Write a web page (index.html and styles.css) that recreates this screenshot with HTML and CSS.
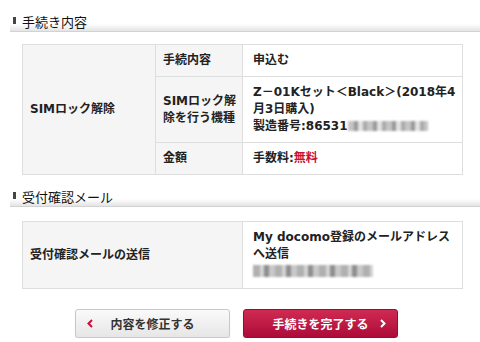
FILE: index.html
```html
<!DOCTYPE html>
<html lang="ja">
<head>
    <meta charset="UTF-8">
    <meta name="viewport" content="width=device-width, initial-scale=1.0">
    <title>手続き内容</title>
    <link rel="stylesheet" href="styles.css">
</head>
<body>
    <h2 class="heading">手続き内容</h2>
    <table class="info">
        <colgroup>
            <col class="c-item">
            <col class="c-sub">
            <col>
        </colgroup>
        <tr>
            <th rowspan="3">SIMロック解除</th>
            <th class="sub">手続内容</th>
            <td>申込む</td>
        </tr>
        <tr>
            <th class="sub">SIMロック解除を行う機種</th>
            <td>Z－01Kセット＜Black＞(2018年4月3日購入)<br>製造番号:86531<span class="mask mask-num"></span></td>
        </tr>
        <tr>
            <th class="sub">金額</th>
            <td>手数料:<span class="free">無料</span></td>
        </tr>
    </table>

    <h2 class="heading">受付確認メール</h2>
    <table class="info">
        <colgroup>
            <col class="c-wide">
            <col>
        </colgroup>
        <tr>
            <th>受付確認メールの送信</th>
            <td>My docomo登録のメールアドレスへ送信<br><span class="mask mask-mail"></span></td>
        </tr>
    </table>

    <div class="actions">
        <button class="btn btn-back">
            <svg width="6" height="9" viewBox="0 0 6 9"><polyline points="5,1 1.5,4.5 5,8" fill="none" stroke="#c8103c" stroke-width="2"/></svg>
            <span>内容を修正する</span>
            <span></span>
        </button>
        <button class="btn btn-done">
            <span></span>
            <span>手続きを完了する</span>
            <svg width="6" height="9" viewBox="0 0 6 9"><polyline points="1,1 4.5,4.5 1,8" fill="none" stroke="#fff" stroke-width="2"/></svg>
        </button>
    </div>
</body>
</html>
```

FILE: styles.css
```css
body {
    margin: 0;
    background: #fff;
    color: #222;
    font-family: "DejaVu Sans", "Noto Sans CJK JP", sans-serif;
    font-size: 12px;
}
.heading {
    margin: 13px 0 0 10px;
    padding-left: 3px;
    height: 18px;
    line-height: 18px;
    font-family: "Noto Sans CJK JP", sans-serif;
    font-size: 13px;
    font-weight: normal;
    color: #111;
    background: linear-gradient(#fff 60%, #e4e4e4);
    border-bottom: 1px solid #d2d2d2;
}
.heading::before {
    content: "";
    display: inline-block;
    width: 3px;
    height: 7px;
    margin-right: 6px;
    vertical-align: 3px;
    background: #444;
}
.info {
    margin: 12px 0 0 22px;
    width: 441px;
    border-collapse: collapse;
    table-layout: fixed;
    border: 1px solid #dedede;
    line-height: 17px;
}
.info + .heading {
    margin-top: 13px;
}
.info + .heading + .info {
    margin-top: 14px;
}
.c-item { width: 133px; }
.c-sub { width: 87px; }
.c-wide { width: 220px; }
.info th,
.info td {
    border: 1px solid #dedede;
    padding: 7px 7px;
    text-align: left;
    font-weight: bold;
    vertical-align: middle;
}
.info th {
    background: #f5f5f5;
}
.info th.sub {
    padding-right: 4px;
}
.info td {
    background: #fff;
    padding-left: 10px;
    padding-right: 3px;
}
.free {
    color: #c8103c;
}
.mask {
    display: inline-block;
    vertical-align: -1px;
    filter: blur(0.8px);
}
.mask-num {
    width: 80px;
    height: 10px;
    background: repeating-linear-gradient(90deg, #c4c4c4 0 6px, #999 6px 10px, #e2e2e2 10px 15px, #aaa 15px 19px);
}
.mask-mail {
    width: 120px;
    height: 12px;
    margin-top: 2px;
    background: repeating-linear-gradient(90deg, #b0b0b0 0 7px, #d4d4d4 7px 11px, #8e8e8e 11px 16px, #c8c8c8 16px 22px);
}
.actions {
    display: flex;
    gap: 13px;
    margin: 20px 0 0 75px;
}
.btn {
    display: grid;
    grid-template-columns: 14px 1fr 14px;
    align-items: center;
    width: 155px;
    height: 29px;
    padding: 0 7px;
    border-radius: 3px;
    font-family: "Noto Sans CJK JP", sans-serif;
    font-size: 12px;
    font-weight: bold;
    cursor: pointer;
}
.btn-back {
    color: #333;
    background: linear-gradient(#fafafa, #e6e6e6);
    border: 1px solid #c8c8c8;
    box-shadow: 0 1px 1px rgba(0, 0, 0, 0.15);
}
.btn-done {
    color: #fff;
    background: linear-gradient(#cf2a52, #ad0c39);
    border: 1px solid #9a0a32;
    box-shadow: 0 1px 1px rgba(0, 0, 0, 0.2);
}
.btn svg {
    justify-self: center;
}
```
